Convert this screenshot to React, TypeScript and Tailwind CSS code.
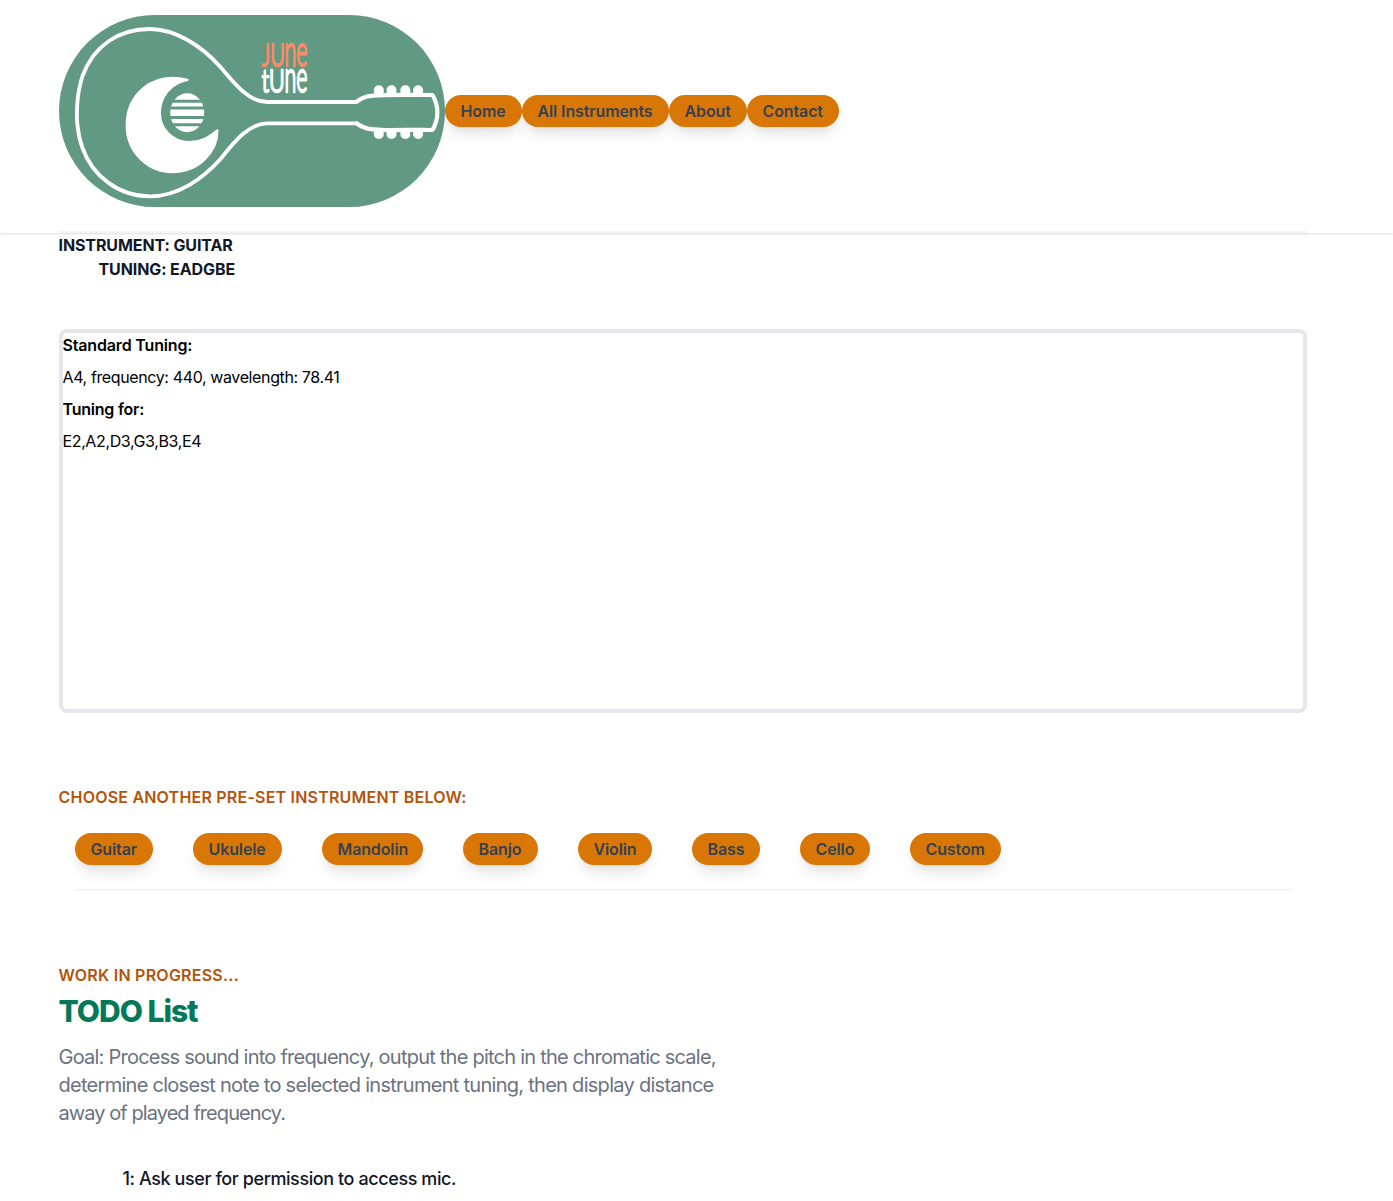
import React from "react";

function Logo() {
  return (
    <svg viewBox="58.5 15 386 192" className="h-48 w-[386px] shrink-0 rounded-full bg-[#629983]" fill="none">
      <path
        d="M355.7 102H267C247 102 233 82 219 66C201 46 175 29 149.3 29C118 29 93 46 82 76C76 94 76.500 113 76.500 113C76.500 113 75.500 130 82 148C92 176 118 196.300 149.300 196.300C178 196.300 203 178 220 159C235 140 249 123.300 267 123.300H355.700"
        stroke="#fff"
        strokeWidth="3.800"
      />
      <path
        d="M355 102.500C362 97 366 95.300 384 95.100C402 94.400 415 95 432 95C438.500 106 438.500 119 432 130C415 129.500 402 130.300 384 130C366 129.500 362 128 355 122.500"
        stroke="#fff"
        strokeWidth="4.200"
        strokeLinejoin="bevel"
      />
      {[378.3, 391, 404.8, 417.6].map((x) => (
        <g key={x} fill="#fff">
          <rect x={x - 5} y="85.300" width="10" height="10.500" rx="4.900" />
          <rect x={x - 5} y="128.500" width="10" height="10.500" rx="4.900" />
        </g>
      ))}
      <path
        d="M187 79.800C170 83 159.300 97 159.300 113C159.300 129 172 142.200 189 142.200C200 142.200 207 138.500 216.800 130.500C217 151 199 172 172 172C146 172 126.300 151 126.300 125C126.300 97 149 71 187 79.800Z"
        fill="#fff"
        stroke="#fff"
        strokeWidth="2.400"
        strokeLinejoin="round"
      />
      <ellipse cx="186.700" cy="112.800" rx="17" ry="19.500" fill="#fff" />
      <path d="M168 101.200h37M168 108h37M168 117.500h37M168 124.700h37" stroke="#629983" strokeWidth="3" />
      <g fontFamily="Lato, sans-serif" fontSize="20" fontWeight="300" strokeWidth="1.900" strokeLinejoin="round">
        <g fill="#fb8a66" stroke="#fb8a66">
          <text transform="translate(261.300 65.500) scale(1 1.580)" textLength="23" lengthAdjust="spacingAndGlyphs" vectorEffect="non-scaling-stroke">JU</text>
          <text transform="translate(284 66) scale(1 2.200)" textLength="23" lengthAdjust="spacingAndGlyphs" vectorEffect="non-scaling-stroke">ne</text>
        </g>
        <g fill="#fff" stroke="#fff">
          <text transform="translate(261.300 91.500) scale(1 1.580)" textLength="23" lengthAdjust="spacingAndGlyphs" vectorEffect="non-scaling-stroke">tU</text>
          <text transform="translate(284 92) scale(1 2.150)" textLength="23" lengthAdjust="spacingAndGlyphs" vectorEffect="non-scaling-stroke">ne</text>
        </g>
      </g>
    </svg>
  );
}

const pill =
  "flex h-8 items-center pl-4 whitespace-nowrap rounded-full bg-[#d97706] text-base font-semibold tracking-[-0.12px] text-[#374151] shadow-lg";

const nav = [
  { label: "Home", width: "w-[77px]" },
  { label: "All Instruments", width: "w-[147px]" },
  { label: "About", width: "w-[78px]" },
  { label: "Contact", width: "w-[92px]" },
];

const instruments = [
  { label: "Guitar", width: "w-[78px]" },
  { label: "Ukulele", width: "w-[89px]" },
  { label: "Mandolin", width: "w-[101px]" },
  { label: "Banjo", width: "w-[75px]" },
  { label: "Violin", width: "w-[74px]" },
  { label: "Bass", width: "w-[68px]" },
  { label: "Cello", width: "w-[70px]" },
  { label: "Custom", width: "w-[91px]" },
];

export default function App() {
  return (
    <div className="h-[1201px] overflow-hidden bg-white font-['Inter',sans-serif] text-base text-black">
      <header className="bg-white pl-[58.5px] shadow-sm">
        <div className="flex h-[233px] w-[1248px] items-center border-b-2 border-[#f3f4f6] pb-[9px]">
          <Logo />
          <nav className="flex">
            {nav.map((item) => (
              <a key={item.label} className={`${pill} ${item.width}`}>
                {item.label}
              </a>
            ))}
          </nav>
        </div>
      </header>
      <main className="ml-[58.5px] w-[1248px]">
        <h1 className="font-[650] leading-6 tracking-[-0.1px] text-[#111827]">
          <span className="block">INSTRUMENT: GUITAR</span>
          <span className="block pl-10">TUNING: EADGBE</span>
        </h1>
        <section className="mt-12 h-96 rounded-lg border-4 border-[#e5e7eb] leading-6">
          <h2 className="font-semibold tracking-[-0.16px]">Standard Tuning:</h2>
          <p className="mt-2 tracking-[-0.38px]">A4, frequency: 440, wavelength: 78.41</p>
          <h2 className="mt-2 font-semibold tracking-[-0.22px]">Tuning for:</h2>
          <p className="mt-2 tracking-[-0.37px]">E2,A2,D3,G3,B3,E4</p>
        </section>
        <section className="mt-18">
          <h2 className="font-semibold leading-6 tracking-[0.21px] text-[#b45309]">
            CHOOSE ANOTHER PRE-SET INSTRUMENT BELOW:
          </h2>
          <div className="mx-4 mt-6 flex gap-10 border-b-2 border-[#f3f4f6] pb-6">
            {instruments.map((item) => (
              <a key={item.label} className={`${pill} ${item.width}`}>
                {item.label}
              </a>
            ))}
          </div>
        </section>
        <section className="mt-18">
          <h2 className="font-semibold leading-6 tracking-[0.24px] text-[#b45309]">WORK IN PROGRESS...</h2>
          <p className="mt-2 text-3xl font-extrabold leading-8 tracking-[-1px] text-[#047857]">TODO List</p>
          <p className="mt-4 w-[672px] text-xl leading-7 text-[#6b7280]">
            <span className="block tracking-[-0.765px]">
              Goal: Process sound into frequency, output the pitch in the chromatic scale,
            </span>
            <span className="block tracking-[-0.72px]">
              determine closest note to selected instrument tuning, then display distance
            </span>
            <span className="block tracking-[-0.93px]">away of played frequency.</span>
          </p>
          <p className="ml-16 mt-10 text-lg font-medium leading-6 tracking-[-0.41px] text-[#111827]">
            1: Ask user for permission to access mic.
          </p>
        </section>
      </main>
    </div>
  );
}
